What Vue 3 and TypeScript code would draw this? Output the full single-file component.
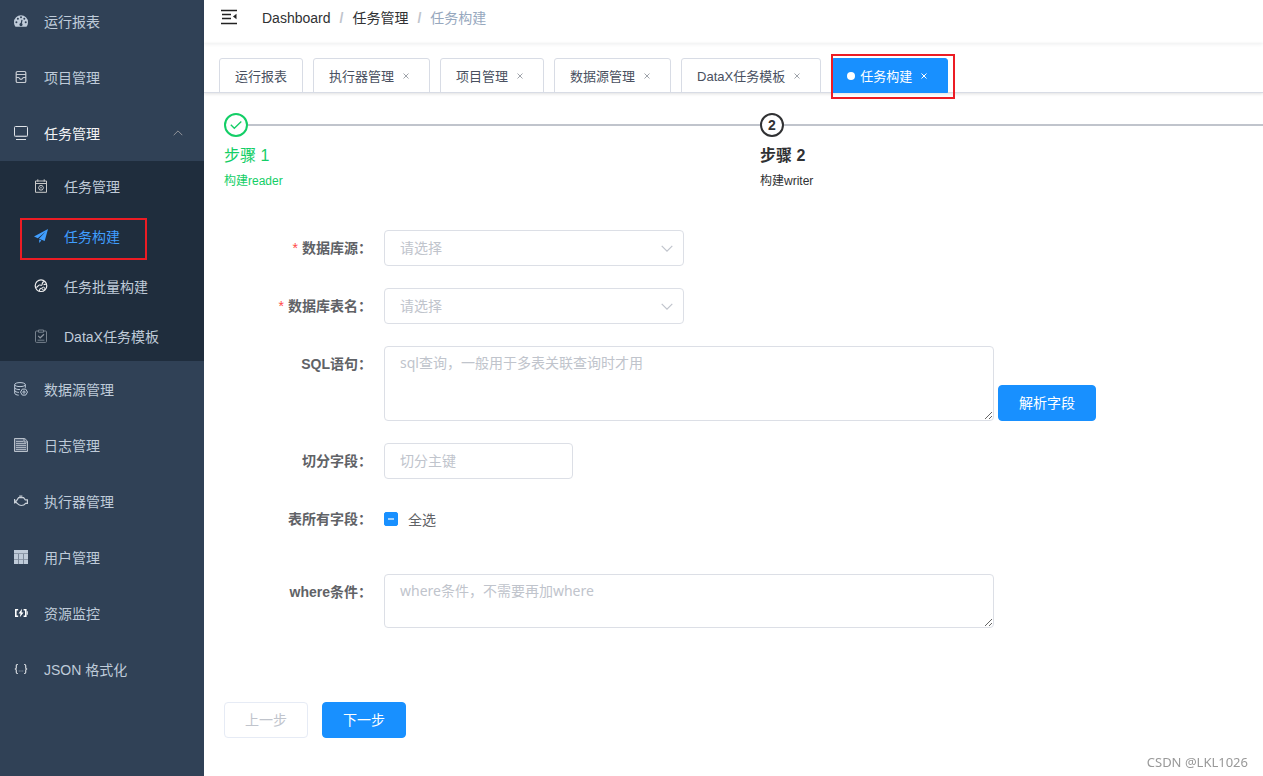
<script setup lang="ts">
import { ref } from 'vue'

interface Shape {
  d: string
  fill?: string
  stroke?: string
  width?: number
}

interface MenuItem {
  label: string
  icon: string
  active?: boolean
  open?: boolean
  children?: MenuItem[]
}

interface Tab {
  label: string
  closable: boolean
  active?: boolean
}

const text = '#bfcbd9'
const base = '#304156'

const icons: Record<string, Shape[]> = {
  dashboard: [
    { d: 'M7 1.3a7 7 0 0 0-7 7c0 1.8.6 3.3 1.5 4.5h11A7 7 0 0 0 14 8.3a7 7 0 0 0-7-7z', fill: text },
    { d: 'M1.4 8.3a1 1 0 1 0 2 0a1 1 0 1 0-2 0M2.9 4.8a1 1 0 1 0 2 0a1 1 0 1 0-2 0M6 3.3a1 1 0 1 0 2 0a1 1 0 1 0-2 0M9.3 4.8a1 1 0 1 0 2 0a1 1 0 1 0-2 0M10.7 8.3a1 1 0 1 0 2 0a1 1 0 1 0-2 0', fill: base },
    { d: 'M7 10.5l1-4.6', stroke: base, width: 1.2 },
    { d: 'M5.4 10.6a1.6 1.6 0 1 0 3.2 0a1.6 1.6 0 1 0-3.2 0', fill: base }
  ],
  project: [
    { d: 'M3.5 1.5h7a1.3 1.3 0 0 1 1.300 1.300v8.400a1.300 1.300 0 0 1-1.300 1.300h-7a1.300 1.300 0 0 1-1.300-1.300V2.800a1.300 1.300 0 0 1 1.300-1.300z', stroke: '#c8ccd2', width: 1.2 },
    { d: 'M2 4.500h10M2 7.500h2.600c.6 0 .6 1.800 2.400 1.800s1.800-1.800 2.400-1.800H12', stroke: '#c8ccd2', width: 1.2 }
  ],
  monitor: [
    { d: 'M1.5.5h11a1 1 0 0 1 1 1v8a1 1 0 0 1-1 1h-11a1 1 0 0 1-1-1v-8a1 1 0 0 1 1-1z', stroke: '#dfe3e8' },
    { d: 'M1 9.8h12', stroke: '#7f8b9a' },
    { d: 'M2 13.5h10', stroke: '#dfe3e8' }
  ],
  schedule: [
    { d: 'M1.5 2h11v11.3h-11zM1.5 4.5h11M3.8.3v2.4M10.2.3v2.4', stroke: '#c8c8c8' },
    { d: 'M4.5 8.8L5.7 6.6h2.6l1.2 2.2l-1.2 2.2H5.7z', stroke: '#c8c8c8' },
    { d: 'M6.3 8.8a.7.7 0 1 0 1.4 0a.7.7 0 1 0-1.4 0', fill: '#dddddd' }
  ],
  plane: [
    { d: 'M14 0L0 7.4l3.8 1.8L11.7 2.6L5 9.7l5.7 2.4zM5.200 10.400V14l2.200-2.600z', fill: '#409eff' }
  ],
  globe: [
    { d: 'M1.2 6.7a5.8 5.8 0 1 0 11.6 0a5.8 5.8 0 1 0-11.6 0', stroke: '#eeeeee', width: 1.2 },
    { d: 'M1.5 8.200c2.800.6 2-2 4-2.200s2 1.200 2.600-.6c.3-1.800 1-3 2.600-2.800M5.500 12.200c-.4-1.800.6-2.800 2.300-3M9.600 5.600l3-.6', stroke: '#eeeeee', width: 1.1 },
    { d: 'M8 9.600a1.400 1.400 0 1 0 2.800 0a1.400 1.400 0 1 0-2.800 0', stroke: '#eeeeee' }
  ],
  clipboard: [
    { d: 'M4 2H2.5a1 1 0 0 0-1 1v9.4a1 1 0 0 0 1 1h9a1 1 0 0 0 1-1V3a1 1 0 0 0-1-1H10M4.5 1h5v2.2h-5zM3.6 11.2h6.8', stroke: '#76818d' },
    { d: 'M4.2 6.8l2 2l3.8-3.6', stroke: '#8c959f', width: 1.2 }
  ],
  database: [
    { d: 'M.7 2.6C.7 1.3 3.2.6 6 .6s5.3.7 5.3 2S8.800 4.600 6 4.600S.7 3.900.7 2.600v8.600c0 1 1.800 1.800 4 2M11.300 2.600v3.200M.7 5.600c0 1.200 2.300 2 5.300 2M.7 8.400c0 1.100 1.800 1.900 4.200 2', stroke: text },
    { d: 'M8.300 7.100h3.400l1.800 3l-1.800 3H8.300l-1.800-3z', stroke: text },
    { d: 'M8.900 10.100a1.100 1.100 0 1 0 2.200 0a1.100 1.100 0 1 0-2.200 0', stroke: text }
  ],
  log: [
    { d: 'M.5.5h10.300l2.700 2.700v10.300H.5z', fill: '#56657a', stroke: '#b8c0ca' },
    { d: 'M2 3.500h7M2 5.500h10M2 7.500h10M2 9.500h10M2 11.500h10', stroke: '#aab3bf' },
    { d: 'M10 1v3h3', stroke: '#b8c0ca' }
  ],
  engine: [
    { d: 'M.6 5v4.600M.6 7.200l1.700-.1l2.300-3.500h5l1.700 2.200h2.100v3.500h-1.800c-1 1.500-2.500 2.200-4.400 2.200c-2.600 0-3.300-1.700-4.900-2.900L.6 8M5.200 2.200h3.200', stroke: '#c9d0d8', width: 1.2 }
  ],
  table: [
    { d: 'M0 0h14v14H0z', fill: text },
    { d: 'M0 3.500h14M0 9.500h14', stroke: '#8d99a9' },
    { d: 'M4.500 4v10M9.500 4v10', stroke: '#7d8a9b' }
  ],
  battery: [
    { d: 'M4.200 3.700H1.800v6.600h2.400M9.600 3.700h2.200v6.600H9.600', stroke: '#ffffff', width: 1.6 },
    { d: 'M8 2.800L4.500 7.400h2L5.800 11.200L9.600 6.500h-2z', fill: '#ffffff' },
    { d: 'M13.300 5.300v3.400', stroke: '#dfe3e8', width: 1.2 }
  ],
  json: [
    { d: 'M3.900 2.500h-.6c-.8 0-1 .4-1 1.200v2c0 .8-.5 1.300-1.500 1.300c1 0 1.500.5 1.500 1.300v2c0 .8.200 1.200 1 1.200h.6M10.100 2.500h.6c.8 0 1 .4 1 1.200v2c0 .8.500 1.300 1.500 1.300c-1 0-1.500.5-1.500 1.300v2c0 .8-.2 1.200-1 1.200h-.6', stroke: '#d5d9de', width: 1.2 },
    { d: 'M4.700 8.600h1v1h-1zM6.500 8.600h1v1h-1zM8.300 8.600h1v1h-1z', fill: '#8f9aa8' }
  ]
}

const menu: MenuItem[] = [
  { label: '运行报表', icon: 'dashboard' },
  { label: '项目管理', icon: 'project' },
  {
    label: '任务管理',
    icon: 'monitor',
    open: true,
    children: [
      { label: '任务管理', icon: 'schedule' },
      { label: '任务构建', icon: 'plane', active: true },
      { label: '任务批量构建', icon: 'globe' },
      { label: 'DataX任务模板', icon: 'clipboard' }
    ]
  },
  { label: '数据源管理', icon: 'database' },
  { label: '日志管理', icon: 'log' },
  { label: '执行器管理', icon: 'engine' },
  { label: '用户管理', icon: 'table' },
  { label: '资源监控', icon: 'battery' },
  { label: 'JSON 格式化', icon: 'json' }
]

const tabs: Tab[] = [
  { label: '运行报表', closable: false },
  { label: '执行器管理', closable: true },
  { label: '项目管理', closable: true },
  { label: '数据源管理', closable: true },
  { label: 'DataX任务模板', closable: true },
  { label: '任务构建', closable: true, active: true }
]

const source = ref('')
const table = ref('')
const sql = ref('')
const splitKey = ref('')
const allFields = ref(false)
const where = ref('')
</script>

<template>
  <div class="layout">
    <nav class="sidebar" aria-label="主菜单">
      <ul class="menu">
        <li v-for="item in menu" :key="item.label">
          <a href="#" class="menu-link" :class="{ 'is-open': item.open }">
            <svg class="icon" viewBox="0 0 14 14" aria-hidden="true">
              <path
                v-for="(s, i) in icons[item.icon]"
                :key="i"
                :d="s.d"
                :fill="s.fill ?? 'none'"
                :stroke="s.stroke ?? 'none'"
                :stroke-width="s.width ?? 1"
              />
            </svg>
            <span>{{ item.label }}</span>
            <svg v-if="item.children" class="caret" viewBox="0 0 10 6" aria-hidden="true">
              <path d="M.7 5.200L5 .9l4.300 4.300" fill="none" stroke="#909399" />
            </svg>
          </a>
          <ul v-if="item.children" class="submenu">
            <li v-for="child in item.children" :key="child.label">
              <a href="#" class="menu-link" :class="{ 'is-active': child.active }">
                <svg class="icon" viewBox="0 0 14 14" aria-hidden="true">
                  <path
                    v-for="(s, i) in icons[child.icon]"
                    :key="i"
                    :d="s.d"
                    :fill="s.fill ?? 'none'"
                    :stroke="s.stroke ?? 'none'"
                    :stroke-width="s.width ?? 1"
                  />
                </svg>
                <span>{{ child.label }}</span>
              </a>
            </li>
          </ul>
        </li>
      </ul>
    </nav>

    <div class="content">
      <header class="navbar">
        <button type="button" class="toggle" aria-label="收起菜单">
          <svg viewBox="0 0 16 16" width="16" height="16" aria-hidden="true">
            <path d="M0 1.500h16M1 5.500h9M1 9.500h9M0 14.500h16" fill="none" stroke="#222222" stroke-width="1.500" />
            <path d="M15.500 4.700v5.600L12 7.500z" fill="#222222" />
          </svg>
        </button>
        <nav class="breadcrumb" aria-label="面包屑">
          <a href="#">Dashboard</a>
          <span class="slash">/</span>
          <a href="#">任务管理</a>
          <span class="slash">/</span>
          <span class="current">任务构建</span>
        </nav>
      </header>

      <div class="tabs">
        <div v-for="tab in tabs" :key="tab.label" class="tab" :class="{ 'is-active': tab.active }">
          <a href="#">{{ tab.label }}</a>
          <button v-if="tab.closable" type="button" class="close" :aria-label="'关闭' + tab.label">
            <svg viewBox="0 0 6 6" width="6" height="6" aria-hidden="true">
              <path d="M.5.5l5 5M5.500.5l-5 5" fill="none" stroke="currentColor" />
            </svg>
          </button>
        </div>
      </div>

      <main class="main">
        <ol class="steps">
          <li class="step is-done">
            <div class="step-head">
              <span class="step-mark">
                <svg viewBox="0 0 12 10" width="12" height="10" aria-hidden="true">
                  <path d="M.8 4.800l3.500 3.500l7-6.800" fill="none" stroke="currentColor" stroke-width="1.300" />
                </svg>
              </span>
            </div>
            <div class="step-title">步骤 1</div>
            <div class="step-desc">构建reader</div>
          </li>
          <li class="step is-current">
            <div class="step-head"><span class="step-mark">2</span></div>
            <div class="step-title">步骤 2</div>
            <div class="step-desc">构建writer</div>
          </li>
        </ol>

        <form class="form" @submit.prevent>
          <div class="row">
            <label class="label required" for="source">数据库源：</label>
            <div class="select">
              <select id="source" v-model="source" required>
                <option value="" disabled>请选择</option>
              </select>
              <svg class="arrow" viewBox="0 0 12 7" aria-hidden="true">
                <path d="M.7.8L6 6.100L11.300.8" fill="none" stroke="#c0c4cc" stroke-width="1.200" />
              </svg>
            </div>
          </div>
          <div class="row">
            <label class="label required" for="table">数据库表名：</label>
            <div class="select">
              <select id="table" v-model="table" required>
                <option value="" disabled>请选择</option>
              </select>
              <svg class="arrow" viewBox="0 0 12 7" aria-hidden="true">
                <path d="M.7.8L6 6.100L11.300.8" fill="none" stroke="#c0c4cc" stroke-width="1.200" />
              </svg>
            </div>
          </div>
          <div class="row">
            <label class="label" for="sql">SQL语句：</label>
            <div class="inline">
              <textarea id="sql" v-model="sql" class="field area" rows="3" placeholder="sql查询，一般用于多表关联查询时才用"></textarea>
              <button type="button" class="btn primary">解析字段</button>
            </div>
          </div>
          <div class="row">
            <label class="label" for="split">切分字段：</label>
            <input id="split" v-model="splitKey" class="field text" type="text" placeholder="切分主键" />
          </div>
          <div class="row fields-row">
            <span id="fields-label" class="label">表所有字段：</span>
            <label class="check">
              <input v-model="allFields" type="checkbox" :indeterminate="!allFields" aria-describedby="fields-label" />
              <span>全选</span>
            </label>
          </div>
          <div class="row">
            <label class="label" for="where">where条件：</label>
            <textarea id="where" v-model="where" class="field area" rows="2" placeholder="where条件，不需要再加where"></textarea>
          </div>
        </form>

        <div class="actions">
          <button type="button" class="btn" disabled>上一步</button>
          <button type="button" class="btn primary">下一步</button>
        </div>
      </main>
    </div>

    <div class="credit">CSDN @LKL1026</div>
  </div>
</template>

<style>
body {
  margin: 0;
}
</style>

<style scoped>
*,
*::before,
*::after {
  box-sizing: border-box;
}

.layout {
  display: flex;
  min-height: 100vh;
  overflow: hidden;
  background: #ffffff;
  color: #606266;
  font-family: "Liberation Sans", "Noto Sans CJK SC", sans-serif;
  font-size: 14px;
}

a {
  color: inherit;
  text-decoration: none;
}

button,
input,
select,
textarea {
  font: inherit;
}

.sidebar {
  flex: 0 0 204px;
  overflow: hidden;
  background: #304156;
}

.menu,
.submenu,
.steps {
  margin: 0;
  padding: 0;
  list-style: none;
}

.menu {
  margin-top: -7px;
}

.menu-link {
  position: relative;
  display: flex;
  align-items: center;
  gap: 16px;
  height: 56px;
  padding: 0 21px 0 14px;
  color: #bfcbd9;
  white-space: nowrap;
}

.menu-link.is-open {
  color: #f4f4f5;
}

.icon {
  flex: none;
  width: 14px;
  height: 14px;
}

.caret {
  width: 10px;
  height: 6px;
  margin-left: auto;
}

.submenu {
  background: #1f2d3d;
}

.submenu .menu-link {
  height: 50px;
  padding-left: 34px;
}

.submenu .is-active {
  color: #409eff;
}

.submenu .is-active::after {
  content: "";
  position: absolute;
  top: 7px;
  left: 20px;
  width: 127px;
  height: 42px;
  border: 2px solid #ec1c24;
}

.content {
  flex: 1;
  min-width: 0;
}

.navbar {
  display: flex;
  align-items: center;
  height: 43px;
  padding: 0 17px 9px;
  box-shadow: 0 1px 4px rgba(0, 21, 41, 0.08);
}

.toggle {
  display: flex;
  padding: 0;
  border: 0;
  background: none;
}

.breadcrumb {
  display: flex;
  align-items: baseline;
  gap: 9px;
  margin-left: 25px;
  color: #303133;
}

.slash {
  color: #c0c4cc;
  font-weight: 700;
}

.current {
  color: #97a8be;
}

.tabs {
  display: flex;
  align-items: flex-end;
  gap: 10px;
  height: 50px;
  padding: 0 15px;
  border-bottom: 1px solid #d8dce5;
  box-shadow: 0 1px 3px rgba(0, 0, 0, 0.12);
}

.tab {
  position: relative;
  display: flex;
  flex: none;
  align-items: center;
  height: 35px;
  margin-bottom: -1px;
  padding: 0 15px;
  border: 1px solid #d8dce5;
  border-radius: 3px 3px 0 0;
  color: #495060;
  font-size: 13px;
}

.tab.is-active {
  border-color: #1890ff;
  background: #1890ff;
  color: #ffffff;
}

.tab.is-active::before {
  content: "";
  width: 8px;
  height: 8px;
  margin-right: 5px;
  border-radius: 50%;
  background: #ffffff;
}

.tab.is-active::after {
  content: "";
  position: absolute;
  top: -5px;
  right: -8px;
  bottom: -7px;
  left: -1px;
  border: 2px solid #ec1c24;
  pointer-events: none;
}

.close {
  display: flex;
  align-items: center;
  justify-content: center;
  width: 16px;
  height: 16px;
  margin-left: 4px;
  padding: 0;
  border: 0;
  background: none;
  color: #a0a4ab;
}

.is-active .close {
  color: #ffffff;
}

.main {
  padding: 20px 0 20px 20px;
}

.steps {
  display: flex;
  margin-right: -33px;
}

.step {
  flex: 1;
}

.step-head {
  display: flex;
  align-items: center;
  height: 24px;
}

.step-head::after {
  content: "";
  flex: 1;
  height: 2px;
  background: #c0c4cc;
}

.step-mark {
  display: flex;
  align-items: center;
  justify-content: center;
  width: 24px;
  height: 24px;
  border: 2px solid currentColor;
  border-radius: 50%;
  font-weight: 700;
}

.step-title {
  font-size: 16px;
  line-height: 38px;
}

.step-desc {
  font-size: 12px;
  line-height: 12px;
}

.is-done {
  color: #13ce66;
}

.is-current {
  color: #303133;
}

.is-current .step-title {
  font-weight: 700;
}

.form {
  display: flex;
  flex-direction: column;
  gap: 22px;
  padding-top: 43px;
}

.row {
  display: flex;
  align-items: flex-start;
}

.label {
  flex: 0 0 160px;
  padding-right: 12px;
  font-weight: 700;
  line-height: 36px;
  text-align: right;
}

.required::before {
  content: "*";
  margin-right: 4px;
  color: #ff4949;
  font-weight: 400;
}

.select {
  position: relative;
  width: 300px;
}

.select select {
  display: block;
  width: 100%;
  height: 36px;
  padding: 0 30px 0 15px;
  appearance: none;
  border: 1px solid #dcdfe6;
  border-radius: 4px;
  background: #ffffff;
  color: #c0c4cc;
}

.arrow {
  position: absolute;
  top: 15px;
  right: 11px;
  width: 12px;
  height: 7px;
  pointer-events: none;
}

.field {
  display: block;
  border: 1px solid #dcdfe6;
  border-radius: 4px;
  background: #ffffff;
  color: #606266;
  font-family: "Noto Sans", "Noto Sans CJK SC", sans-serif;
}

.field::placeholder {
  color: #c0c4cc;
}

.text {
  width: 189px;
  height: 36px;
  padding: 0 15px 2px;
}

.area {
  width: 610px;
  min-height: 54px;
  padding: 5px 15px;
  line-height: 21px;
  resize: vertical;
}

.inline {
  display: flex;
  align-items: flex-end;
  gap: 4px;
}

.btn {
  height: 36px;
  padding: 0 20px 2px;
  border: 1px solid #dcdfe6;
  border-radius: 4px;
  background: #ffffff;
  white-space: nowrap;
}

.btn:disabled {
  border-color: #e6ebf5;
  color: #c0c4cc;
}

.btn.primary {
  border-color: #1890ff;
  background: #1890ff;
  color: #ffffff;
}

.check {
  display: flex;
  align-items: center;
  gap: 10px;
  height: 36px;
}

.check input {
  display: flex;
  align-items: center;
  justify-content: center;
  width: 14px;
  height: 14px;
  margin: 0;
  appearance: none;
  border: 1px solid #dcdfe6;
  border-radius: 2px;
}

.check input:checked,
.check input:indeterminate {
  border-color: #1890ff;
  background: #1890ff;
}

.check input:indeterminate::before {
  content: "";
  width: 6px;
  height: 2px;
  background: #a3d3ff;
}

.fields-row {
  padding-bottom: 15px;
}

.actions {
  display: flex;
  gap: 14px;
  padding-top: 74px;
}

.credit {
  position: fixed;
  right: 15px;
  bottom: 5px;
  color: #999999;
  font-family: "Noto Sans", sans-serif;
  font-size: 13px;
  line-height: 18px;
}
</style>
